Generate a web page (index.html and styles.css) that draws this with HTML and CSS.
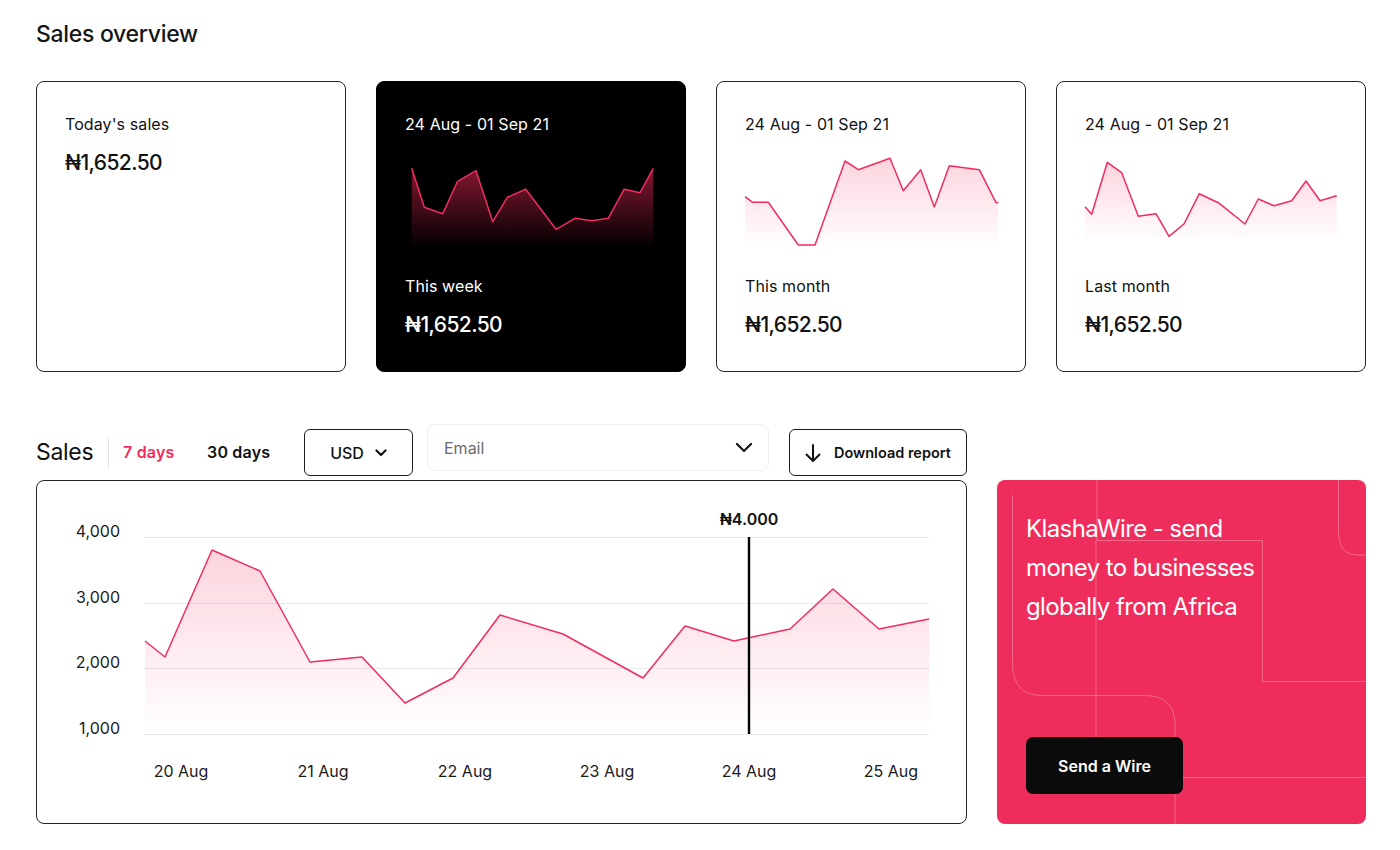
FILE: index.html
```html
<!DOCTYPE html>
<html lang="en">
<head>
<meta charset="utf-8">
<title>Sales overview</title>
<link rel="stylesheet" href="styles.css">
</head>
<body>
<main class="page">
  <h1 class="title">Sales overview</h1>

  <section class="overview">
    <div class="card">
      <div class="label">Today's sales</div>
      <div class="amount amount-first">₦1,652.50</div>
    </div>

    <div class="card card-dark">
      <div class="label">24 Aug - 01 Sep 21</div>
      <svg class="spark" width="254" height="100" viewBox="0 0 254 100">
        <defs>
          <linearGradient id="gDark" x1="0" y1="0" x2="0" y2="1">
            <stop offset="0" stop-color="#f0295a" stop-opacity="0.55"/>
            <stop offset="1" stop-color="#f0295a" stop-opacity="0"/>
          </linearGradient>
        </defs>
        <polygon fill="url(#gDark)" points="6.7,98 6.7,18.3 19.3,57.3 37.7,63.7 52.3,31.7 71,20.7 87.7,71.7 102.3,47.3 120.7,39.3 151,79.3 170,68.3 186.7,70.7 203.3,68.3 219,39.3 235,42.7 248.3,18.3 248.3,98"/>
        <polyline class="spark-line" points="6.7,18.3 19.3,57.3 37.7,63.7 52.3,31.7 71,20.7 87.7,71.7 102.3,47.3 120.7,39.3 151,79.3 170,68.3 186.7,70.7 203.3,68.3 219,39.3 235,42.7 248.3,18.3"/>
      </svg>
      <div class="label">This week</div>
      <div class="amount">₦1,652.50</div>
    </div>

    <div class="card">
      <div class="label">24 Aug - 01 Sep 21</div>
      <svg class="spark" width="254" height="100" viewBox="0 0 254 100">
        <defs>
          <linearGradient id="gLight1" x1="0" y1="0" x2="0" y2="1">
            <stop offset="0" stop-color="#f0295a" stop-opacity="0.2"/>
            <stop offset="1" stop-color="#f0295a" stop-opacity="0"/>
          </linearGradient>
        </defs>
        <polygon fill="url(#gLight1)" points="0,98 0,46.7 7.7,52.3 23.3,52.3 53.3,95 70,95 100,11 113.3,19.7 145,8.3 158.3,40.7 175.7,19.7 189.3,57 204.3,15.7 234.3,19.7 251,52.7 253.3,52.7 253.3,98"/>
        <polyline class="spark-line" points="0,46.7 7.7,52.3 23.3,52.3 53.3,95 70,95 100,11 113.3,19.7 145,8.3 158.3,40.7 175.7,19.7 189.3,57 204.3,15.7 234.3,19.7 251,52.7 253.3,52.7"/>
      </svg>
      <div class="label">This month</div>
      <div class="amount">₦1,652.50</div>
    </div>

    <div class="card">
      <div class="label">24 Aug - 01 Sep 21</div>
      <svg class="spark" width="254" height="100" viewBox="0 0 254 100">
        <defs>
          <linearGradient id="gLight2" x1="0" y1="0" x2="0" y2="1">
            <stop offset="0" stop-color="#f0295a" stop-opacity="0.2"/>
            <stop offset="1" stop-color="#f0295a" stop-opacity="0"/>
          </linearGradient>
        </defs>
        <polygon fill="url(#gLight2)" points="0,92 0,56.7 6.7,64.3 22.3,12.3 36.7,22.7 53.3,66.3 71,63.7 84,86.3 99,74 114.3,43.7 134.3,53.3 160,74 173.3,49 189,55.7 206.7,50.7 221,31 235,50.7 251.7,45.7 251.7,92"/>
        <polyline class="spark-line" points="0,56.7 6.7,64.3 22.3,12.3 36.7,22.7 53.3,66.3 71,63.7 84,86.3 99,74 114.3,43.7 134.3,53.3 160,74 173.3,49 189,55.7 206.7,50.7 221,31 235,50.7 251.7,45.7"/>
      </svg>
      <div class="label">Last month</div>
      <div class="amount">₦1,652.50</div>
    </div>
  </section>

  <section class="sales">
    <div class="sales-main">
      <div class="toolbar">
        <h2 class="sales-title">Sales</h2>
        <span class="divider"></span>
        <button class="tab tab-active">7 days</button>
        <button class="tab tab-month">30 days</button>
        <button class="btn-outline btn-currency">USD
          <svg width="12" height="8" viewBox="0 0 12 8"><path d="M1.5 1.5 L6 6 L10.5 1.5" fill="none" stroke="#111" stroke-width="2.2" stroke-linecap="round" stroke-linejoin="round"/></svg>
        </button>
        <div class="select-email">
          <span>Email</span>
          <svg width="18" height="11" viewBox="0 0 18 11"><path d="M2 2 L9 9 L16 2" fill="none" stroke="#111" stroke-width="2.2" stroke-linecap="round" stroke-linejoin="round"/></svg>
        </div>
        <button class="btn-outline btn-download">
          <svg width="18" height="20" viewBox="0 0 18 20"><path d="M9 2 V18 M2.5 11.5 L9 18 L15.5 11.5" fill="none" stroke="#111" stroke-width="2" stroke-linecap="round" stroke-linejoin="round"/></svg>
          Download report
        </button>
      </div>

      <div class="chart-card">
        <svg class="chart" width="929" height="341" viewBox="37 481 929 341">
          <defs>
            <linearGradient id="gChart" x1="0" y1="0" x2="0" y2="1">
              <stop offset="0" stop-color="#f0295a" stop-opacity="0.2"/>
              <stop offset="1" stop-color="#f0295a" stop-opacity="0"/>
            </linearGradient>
          </defs>
          <g class="grid">
            <line x1="144" y1="537.5" x2="929" y2="537.5"/>
            <line x1="144" y1="603.5" x2="929" y2="603.5"/>
            <line x1="144" y1="668.5" x2="929" y2="668.5"/>
            <line x1="144" y1="734.5" x2="929" y2="734.5"/>
          </g>
          <g class="axis-y">
            <text x="120" y="537">4,000</text>
            <text x="120" y="603">3,000</text>
            <text x="120" y="668">2,000</text>
            <text x="120" y="734">1,000</text>
          </g>
          <polygon fill="url(#gChart)" points="145,734 145,641 165,657 212,550 260,571 310,662 362,657 405,703 453,678 500,615 563,634 643,678 685,626 734,641 790,629 833,589 879,629 929,619 929,734"/>
          <polyline class="chart-line" points="145,641 165,657 212,550 260,571 310,662 362,657 405,703 453,678 500,615 563,634 643,678 685,626 734,641 790,629 833,589 879,629 929,619"/>
          <line class="marker" x1="749" y1="537" x2="749" y2="734"/>
          <text class="marker-label" x="749" y="525">₦4.000</text>
          <g class="axis-x">
            <text x="181" y="777">20 Aug</text>
            <text x="323" y="777">21 Aug</text>
            <text x="465" y="777">22 Aug</text>
            <text x="607" y="777">23 Aug</text>
            <text x="749" y="777">24 Aug</text>
            <text x="891" y="777">25 Aug</text>
          </g>
        </svg>
      </div>
    </div>

    <aside class="promo">
      <svg class="promo-lines" width="369" height="344" viewBox="0 0 369 344">
        <path d="M100 0 V60.5 H265.5 V201.5 H369"/>
        <path d="M99 60 V257"/>
        <path d="M15.5 15 V183 Q15.5 215.5 45 215.5 H148 Q178 215.5 178 245 V344"/>
        <path d="M341.5 0 V52 Q341.5 75 362 75 H369"/>
        <path d="M186 297.5 H369"/>
      </svg>
      <p class="promo-text">KlashaWire - send<br>money to businesses<br>globally from Africa</p>
      <button class="btn-wire">Send a Wire</button>
    </aside>
  </section>
</main>
</body>
</html>
```

FILE: styles.css
```css
* {
  box-sizing: border-box;
}

html, body {
  margin: 0;
  padding: 0;
  background: #ffffff;
}

body {
  font-family: Inter, "Noto Sans", "DejaVu Sans", sans-serif;
  color: #111111;
}

.page {
  padding: 20px 34px 0 36px;
  width: 1400px;
}

.title {
  margin: 0 0 33px;
  font-size: 23px;
  line-height: 28px;
  font-weight: 500;
  letter-spacing: -0.3px;
  color: #161616;
}

/* ---------- overview cards ---------- */
.overview {
  display: grid;
  grid-template-columns: repeat(4, 310px);
  gap: 30px;
}

.card {
  height: 291px;
  border: 1px solid #262626;
  border-radius: 8px;
  padding: 32px 28px;
  display: flex;
  flex-direction: column;
  background: #ffffff;
}

.card-dark {
  background: #000000;
  border-color: #000000;
  color: #ffffff;
}

.label {
  font-size: 16px;
  line-height: 20px;
  font-weight: 400;
  letter-spacing: 0.1px;
}

.amount {
  margin-top: 15px;
  font-size: 21px;
  line-height: 28px;
  font-weight: 500;
  letter-spacing: -0.6px;
}

.spark {
  display: block;
  margin: 16px 0 26px;
  overflow: visible;
}

.spark-line {
  fill: none;
  stroke: #ef2d5e;
  stroke-width: 1.5;
  stroke-linejoin: round;
}

/* ---------- sales section ---------- */
.sales {
  margin-top: 52px;
  display: grid;
  grid-template-columns: 931px 369px;
  column-gap: 30px;
  align-items: end;
}

.toolbar {
  display: flex;
  align-items: flex-end;
  height: 52px;
  margin-bottom: 4px;
}

.sales-title {
  margin: 0;
  width: 58px;
  font-size: 23px;
  line-height: 28px;
  font-weight: 400;
  letter-spacing: -0.3px;
  white-space: nowrap;
  align-self: center;
  position: relative;
  top: 2px;
}

.divider {
  align-self: center;
  position: relative;
  top: 2px;
  width: 1px;
  height: 31px;
  background: #e3e3e3;
  margin-left: 14px;
}

.tab {
  align-self: center;
  position: relative;
  top: 2px;
  border: 0;
  background: none;
  padding: 0;
  font-family: inherit;
  font-size: 16px;
  line-height: 20px;
  font-weight: 600;
  letter-spacing: 0.2px;
  color: #111111;
  text-align: left;
  white-space: nowrap;
}

.tab-active {
  color: #ef2d5e;
  margin-left: 14px;
  width: 53px;
}

.tab-month {
  margin-left: 31px;
  width: 65px;
}

.btn-outline {
  display: flex;
  align-items: center;
  justify-content: center;
  height: 47px;
  border: 1px solid #1c1c1c;
  border-radius: 6px;
  background: #ffffff;
  font-family: inherit;
  color: #111111;
  padding: 0;
}

.btn-currency {
  width: 109px;
  margin-left: 32px;
  font-size: 16px;
  font-weight: 500;
  gap: 11px;
}

.select-email {
  width: 342px;
  height: 47px;
  margin-left: 14px;
  margin-bottom: 5px;
  border: 1px solid #efefef;
  border-radius: 8px;
  display: flex;
  align-items: center;
  justify-content: space-between;
  padding: 0 15px 0 16px;
  font-size: 16px;
  color: #6b6b6b;
}

.btn-download {
  width: 178px;
  margin-left: 20px;
  justify-content: flex-start;
  padding-left: 14px;
  font-size: 14.5px;
  font-weight: 600;
  gap: 12px;
  white-space: nowrap;
}

.chart-card {
  height: 344px;
  border: 1px solid #262626;
  border-radius: 8px;
  overflow: hidden;
}

.chart {
  display: block;
}

.grid line {
  stroke: #e6eaef;
  stroke-width: 1;
}

.axis-y text {
  text-anchor: end;
  font-size: 16px;
  fill: #1a1a1a;
  font-family: Inter, "Noto Sans", sans-serif;
}

.axis-x text {
  text-anchor: middle;
  font-size: 16px;
  fill: #1a1a1a;
  font-family: Inter, "Noto Sans", sans-serif;
}

.chart-line {
  fill: none;
  stroke: #ef2d5e;
  stroke-width: 1.5;
  stroke-linejoin: round;
}

.marker {
  stroke: #000000;
  stroke-width: 2.4;
}

.marker-label {
  text-anchor: middle;
  font-size: 16px;
  font-weight: 600;
  fill: #111111;
  font-family: Inter, "Noto Sans", sans-serif;
}

/* ---------- promo ---------- */
.promo {
  position: relative;
  height: 344px;
  border-radius: 8px;
  background: #ef2d5c;
  overflow: hidden;
  padding: 29px 29px 30px;
  display: flex;
  flex-direction: column;
  justify-content: space-between;
  align-items: flex-start;
}

.promo-lines {
  position: absolute;
  left: 0;
  top: 0;
}

.promo-lines path {
  fill: none;
  stroke: rgba(255, 255, 255, 0.28);
  stroke-width: 1;
}

.promo-text {
  position: relative;
  margin: 0;
  font-size: 24px;
  line-height: 39px;
  font-weight: 400;
  letter-spacing: -0.6px;
  color: #ffffff;
}

.btn-wire {
  position: relative;
  width: 157px;
  height: 57px;
  border: 0;
  border-radius: 7px;
  background: #0b0b0b;
  color: #ffffff;
  font-family: inherit;
  font-size: 16px;
  font-weight: 600;
}
```
